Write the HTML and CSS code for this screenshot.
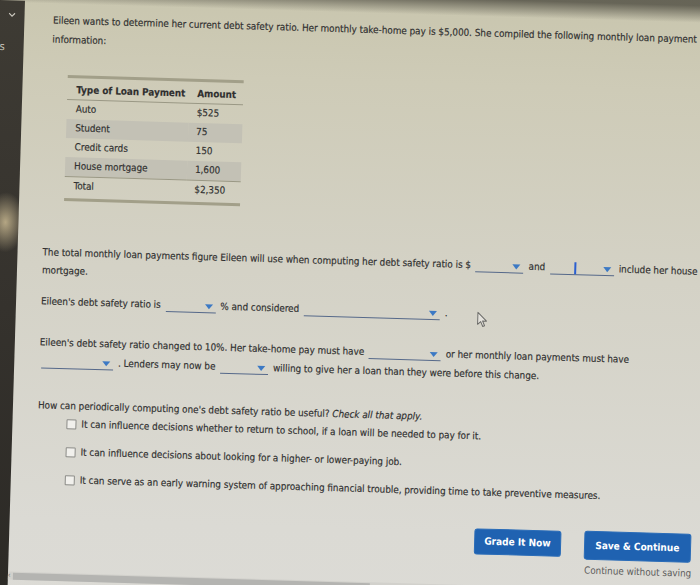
FILE: index.html
```html
<!DOCTYPE html>
<html lang="en">
<head>
<meta charset="utf-8">
<title>Debt safety ratio</title>
<link rel="stylesheet" href="styles.css">
</head>
<body>
<div class="screen">
  <aside class="sidebar">
    <svg class="chev" width="7" height="5" viewBox="0 0 7 5"><polyline points="0.5,0.8 3.5,3.8 6.5,0.8" fill="none" stroke="#c9c6bc" stroke-width="1.2"/></svg>
    <span class="cut">s</span>
  </aside>
  <main class="main">
    <p class="intro">Eileen wants to determine her current debt safety ratio. Her monthly take-home pay is $5,000. She compiled the following monthly loan payment information:</p>
    <table class="loans">
      <colgroup><col class="c1"><col class="c2"></colgroup>
      <thead><tr><th>Type of Loan Payment</th><th class="amt">Amount</th></tr></thead>
      <tbody>
        <tr><td>Auto</td><td class="amt">$525</td></tr>
        <tr class="alt"><td>Student</td><td class="amt">75</td></tr>
        <tr><td>Credit cards</td><td class="amt">150</td></tr>
        <tr class="alt"><td>House mortgage</td><td class="amt">1,600</td></tr>
        <tr class="total"><td>Total</td><td class="amt">$2,350</td></tr>
      </tbody>
    </table>
    <p class="q q1">The total monthly loan payments figure Eileen will use when computing her debt safety ratio is $ <span class="dd dd-s"><span class="caret"></span></span> and <span class="dd dd-m"><span class="ibeam"></span><span class="caret"></span></span> include her house mortgage.</p>
    <p class="q q2">Eileen's debt safety ratio is <span class="dd dd-n"><span class="caret"></span></span> % and considered <span class="dd dd-l"><span class="caret"></span></span> .</p>
    <p class="q q3">Eileen's debt safety ratio changed to 10%. Her take-home pay must have <span class="dd dd-w"><span class="caret"></span></span> or her monthly loan payments must have <span class="dd dd-w"><span class="caret"></span></span> . Lenders may now be <span class="dd dd-s"><span class="caret"></span></span> willing to give her a loan than they were before this change.</p>
    <p class="q q4">How can periodically computing one's debt safety ratio be useful? <em>Check all that apply.</em></p>
    <ul class="options">
      <li><span class="box"></span><span>It can influence decisions whether to return to school, if a loan will be needed to pay for it.</span></li>
      <li><span class="box"></span><span>It can influence decisions about looking for a higher- or lower-paying job.</span></li>
      <li><span class="box"></span><span>It can serve as an early warning system of approaching financial trouble, providing time to take preventive measures.</span></li>
    </ul>
    <div class="actions">
      <div class="btn grade">Grade It Now</div>
      <div class="savegrp">
        <div class="btn save">Save &amp; Continue</div>
        <div class="skip">Continue without saving</div>
      </div>
    </div>
    <div class="hscroll"><span class="harrow">&#8249;</span><span class="thumb"></span></div>
    <svg class="pointer" width="11" height="16" viewBox="0 0 11 16"><path d="M1 1 L1 13 L4 10.2 L6.2 15 L8 14.2 L5.9 9.6 L9.8 9.6 Z" fill="#e4e2dc" stroke="#6d6d6a" stroke-width="1" stroke-linejoin="round"/></svg>
  </main>
</div>
</body>
</html>
```
FILE: styles.css
```css
html, body {
  margin: 0;
  height: 100%;
  overflow: hidden;
  background: #3a3731;
}

.screen {
  width: 740px;
  height: 640px;
  margin-top: -25px;
  padding-top: 25px;
  box-sizing: border-box;
  display: flex;
  transform: rotate(1.7deg);
  transform-origin: 0 25px;
  background:
    linear-gradient(to bottom, rgba(70,68,58,0.75) 0, rgba(70,68,58,0.75) 10px, rgba(70,68,58,0) 27px),
    linear-gradient(to bottom, #c8c5ad 0, #cecbb7 15%, #d4d2c6 45%, #dbdad4 85%, #dcdbd6 100%);
  font-family: "DejaVu Sans Condensed", "Liberation Sans", sans-serif;
  font-size: 9.8px;
  color: #2f2f2f;
  -webkit-text-stroke: 0.15px #2f2f2f;
}

.sidebar {
  width: 25px;
  flex: none;
  display: flex;
  flex-direction: column;
  background:
    radial-gradient(ellipse 20px 30px at 12px 222px, rgba(222,204,160,0.75), rgba(222,204,160,0) 100%),
    linear-gradient(to bottom, #3e3b34 0, #35322d 50%, #2b2925 100%);
  color: #c9c6bc;
  -webkit-text-stroke: 0;
}

.chev {
  margin: 12px 0 0 9px;
}

.cut {
  margin: 24px 0 0 1px;
  font-size: 11px;
  line-height: 12px;
}

.main {
  flex: 1;
  position: relative;
  display: flex;
  flex-direction: column;
  align-items: flex-start;
  padding: 0 28px 0 25px;
}

.intro {
  margin: 9px 0 0 3.6px;
  line-height: 19px;
}

.loans {
  margin: 26px 0 0 20px;
  width: 176px;
  table-layout: fixed;
  border-collapse: separate;
  border-spacing: 0;
  border-top: 3px solid #a29f89;
  border-bottom: 3px solid #a29f89;
}

.c1 { width: 122px; }
.c2 { width: 54px; }

.loans th {
  text-align: left;
  font-weight: bold;
  padding: 5px 0 2px 9px;
  line-height: 14px;
  border-bottom: 1px solid #9a9885;
  white-space: nowrap;
}

.loans td {
  padding: 1px 0 2px 9px;
  line-height: 16px;
  white-space: nowrap;
}

.loans .amt {
  padding-left: 8px;
}

.loans tr.alt td {
  background: #c3c1b5;
}

.loans tr.total td {
  border-top: 1px solid #9a9885;
  padding-bottom: 4px;
}

.q {
  margin: 0;
  line-height: 18px;
}

.q1 { margin-top: 43px; }
.q2 { margin-top: 13px; }
.q3 { margin-top: 21.5px; line-height: 19px; }
.q4 { margin-top: 26px; }

.dd {
  display: inline-block;
  position: relative;
  height: 11px;
  margin: 0 2px;
  border-bottom: 1px solid #56698a;
  vertical-align: -4px;
}

.dd-s { width: 48px; }
.dd-m { width: 64px; }
.dd-n { width: 50px; }
.dd-l { width: 136px; }
.dd-w { width: 72px; }

.caret {
  display: block;
  width: 0;
  height: 0;
  margin: 3px 3px 0 auto;
  border-left: 4.5px solid transparent;
  border-right: 4.5px solid transparent;
  border-top: 5px solid #3c79c4;
}

.ibeam {
  position: absolute;
  left: 24px;
  bottom: 0;
  width: 2px;
  height: 12px;
  background: #2b5fd0;
}

.options {
  list-style: none;
  margin: 0;
  padding: 0 0 0 29px;
}

.options li {
  display: flex;
  align-items: center;
  gap: 5px;
  line-height: 18px;
  margin-top: 10px;
}

.options li:first-child {
  margin-top: 0;
}

.box {
  width: 8px;
  height: 8px;
  flex: none;
  border: 1px solid #8c8c88;
  border-radius: 1px;
  background: #f1f0ec;
}

.actions {
  align-self: stretch;
  display: flex;
  justify-content: flex-end;
  align-items: flex-start;
  gap: 23px;
  margin-top: 26.5px;
  padding-right: 4px;
}

.btn {
  display: flex;
  align-items: center;
  justify-content: center;
  box-sizing: border-box;
  border: 1px solid #2a6cb8;
  border-radius: 3px;
  background: #1f62b1;
  color: #ffffff;
  -webkit-text-stroke: 0;
  font-weight: bold;
  font-size: 10px;
  white-space: nowrap;
}

.grade {
  width: 87px;
  height: 26px;
  margin-top: 0.5px;
}

.save {
  width: 107px;
  height: 29px;
}

.savegrp {
  display: flex;
  flex-direction: column;
}

.skip {
  margin-top: 4px;
  padding-left: 1px;
  line-height: 14px;
  color: #5b5b5b;
  -webkit-text-stroke: 0;
  white-space: nowrap;
}

.hscroll {
  align-self: stretch;
  display: flex;
  align-items: center;
  height: 8px;
  margin: 11.4px -28px 0 -25px;
  background: #d2d1cc;
}

.harrow {
  width: 5px;
  font-size: 8px;
  line-height: 8px;
  color: #777772;
  -webkit-text-stroke: 0;
}

.thumb {
  width: 357px;
  height: 7px;
  background: #b4b4b1;
}

.pointer {
  position: absolute;
  left: 461px;
  top: 297px;
}
```
